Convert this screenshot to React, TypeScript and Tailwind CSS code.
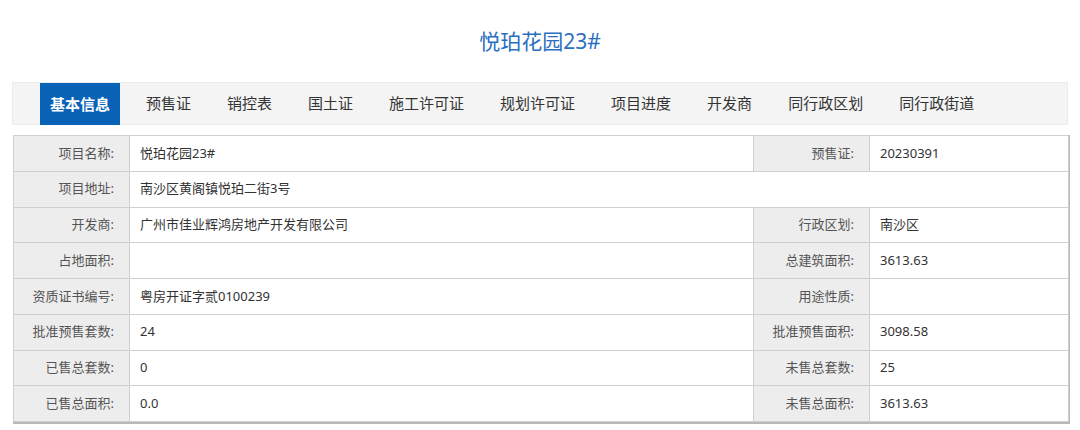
const tabs = [
  "预售证",
  "销控表",
  "国土证",
  "施工许可证",
  "规划许可证",
  "项目进度",
  "开发商",
  "同行政区划",
  "同行政街道",
];

type Row = { label: string; value: string; label2?: string; value2?: string };

const rows: Row[] = [
  { label: "项目名称:", value: "悦珀花园23#", label2: "预售证:", value2: "20230391" },
  { label: "项目地址:", value: "南沙区黄阁镇悦珀二街3号" },
  { label: "开发商:", value: "广州市佳业辉鸿房地产开发有限公司", label2: "行政区划:", value2: "南沙区" },
  { label: "占地面积:", value: "", label2: "总建筑面积:", value2: "3613.63" },
  { label: "资质证书编号:", value: "粤房开证字贰0100239", label2: "用途性质:", value2: "" },
  { label: "批准预售套数:", value: "24", label2: "批准预售面积:", value2: "3098.58" },
  { label: "已售总套数:", value: "0", label2: "未售总套数:", value2: "25" },
  { label: "已售总面积:", value: "0.0", label2: "未售总面积:", value2: "3613.63" },
];

const labelCls =
  "h-[35.75px] border border-[#cfcfcf] bg-[#ededed] pr-[15px] text-right text-[13px] font-normal text-[#555]";
const valueCls = "h-[35.75px] border border-[#cfcfcf] bg-white pl-[10px] text-left text-[13px] text-[#333]";

export default function App() {
  return (
    <div
      className="h-[430px] w-[1080px] overflow-hidden bg-white"
      style={{ fontFamily: '"Noto Sans", "Noto Sans CJK SC", sans-serif' }}
    >
      <h1 className="pt-[27px] text-center text-[21px] leading-[28px] text-[#2b6fc0]">悦珀花园23#</h1>

      <nav className="mx-[12px] mt-[27px] flex h-[43px] items-stretch border border-[#ececec] bg-[#f4f4f4] pl-[27px]">
        <div className="-mb-px flex items-center bg-[#0a62b6] px-[10px] text-[15px] font-bold text-white">
          基本信息
        </div>
        <ul className="ml-[26px] flex items-center gap-[36px] text-[15px] text-[#333]">
          {tabs.map((t) => (
            <li key={t}>{t}</li>
          ))}
        </ul>
      </nav>

      <div className="mx-[13px] mt-[10px] w-[1057px] border-b-2 border-r border-[#b8b8b8]">
        <table className="w-full table-fixed border-collapse">
          <colgroup>
            <col className="w-[116px]" />
            <col className="w-[624px]" />
            <col className="w-[116px]" />
            <col />
          </colgroup>
          <tbody>
            {rows.map((r) =>
              r.label2 === undefined ? (
                <tr key={r.label}>
                  <th className={labelCls}>{r.label}</th>
                  <td className={valueCls} colSpan={3}>
                    {r.value}
                  </td>
                </tr>
              ) : (
                <tr key={r.label}>
                  <th className={labelCls}>{r.label}</th>
                  <td className={valueCls}>{r.value}</td>
                  <th className={labelCls}>{r.label2}</th>
                  <td className={valueCls}>{r.value2}</td>
                </tr>
              )
            )}
          </tbody>
        </table>
      </div>
    </div>
  );
}
